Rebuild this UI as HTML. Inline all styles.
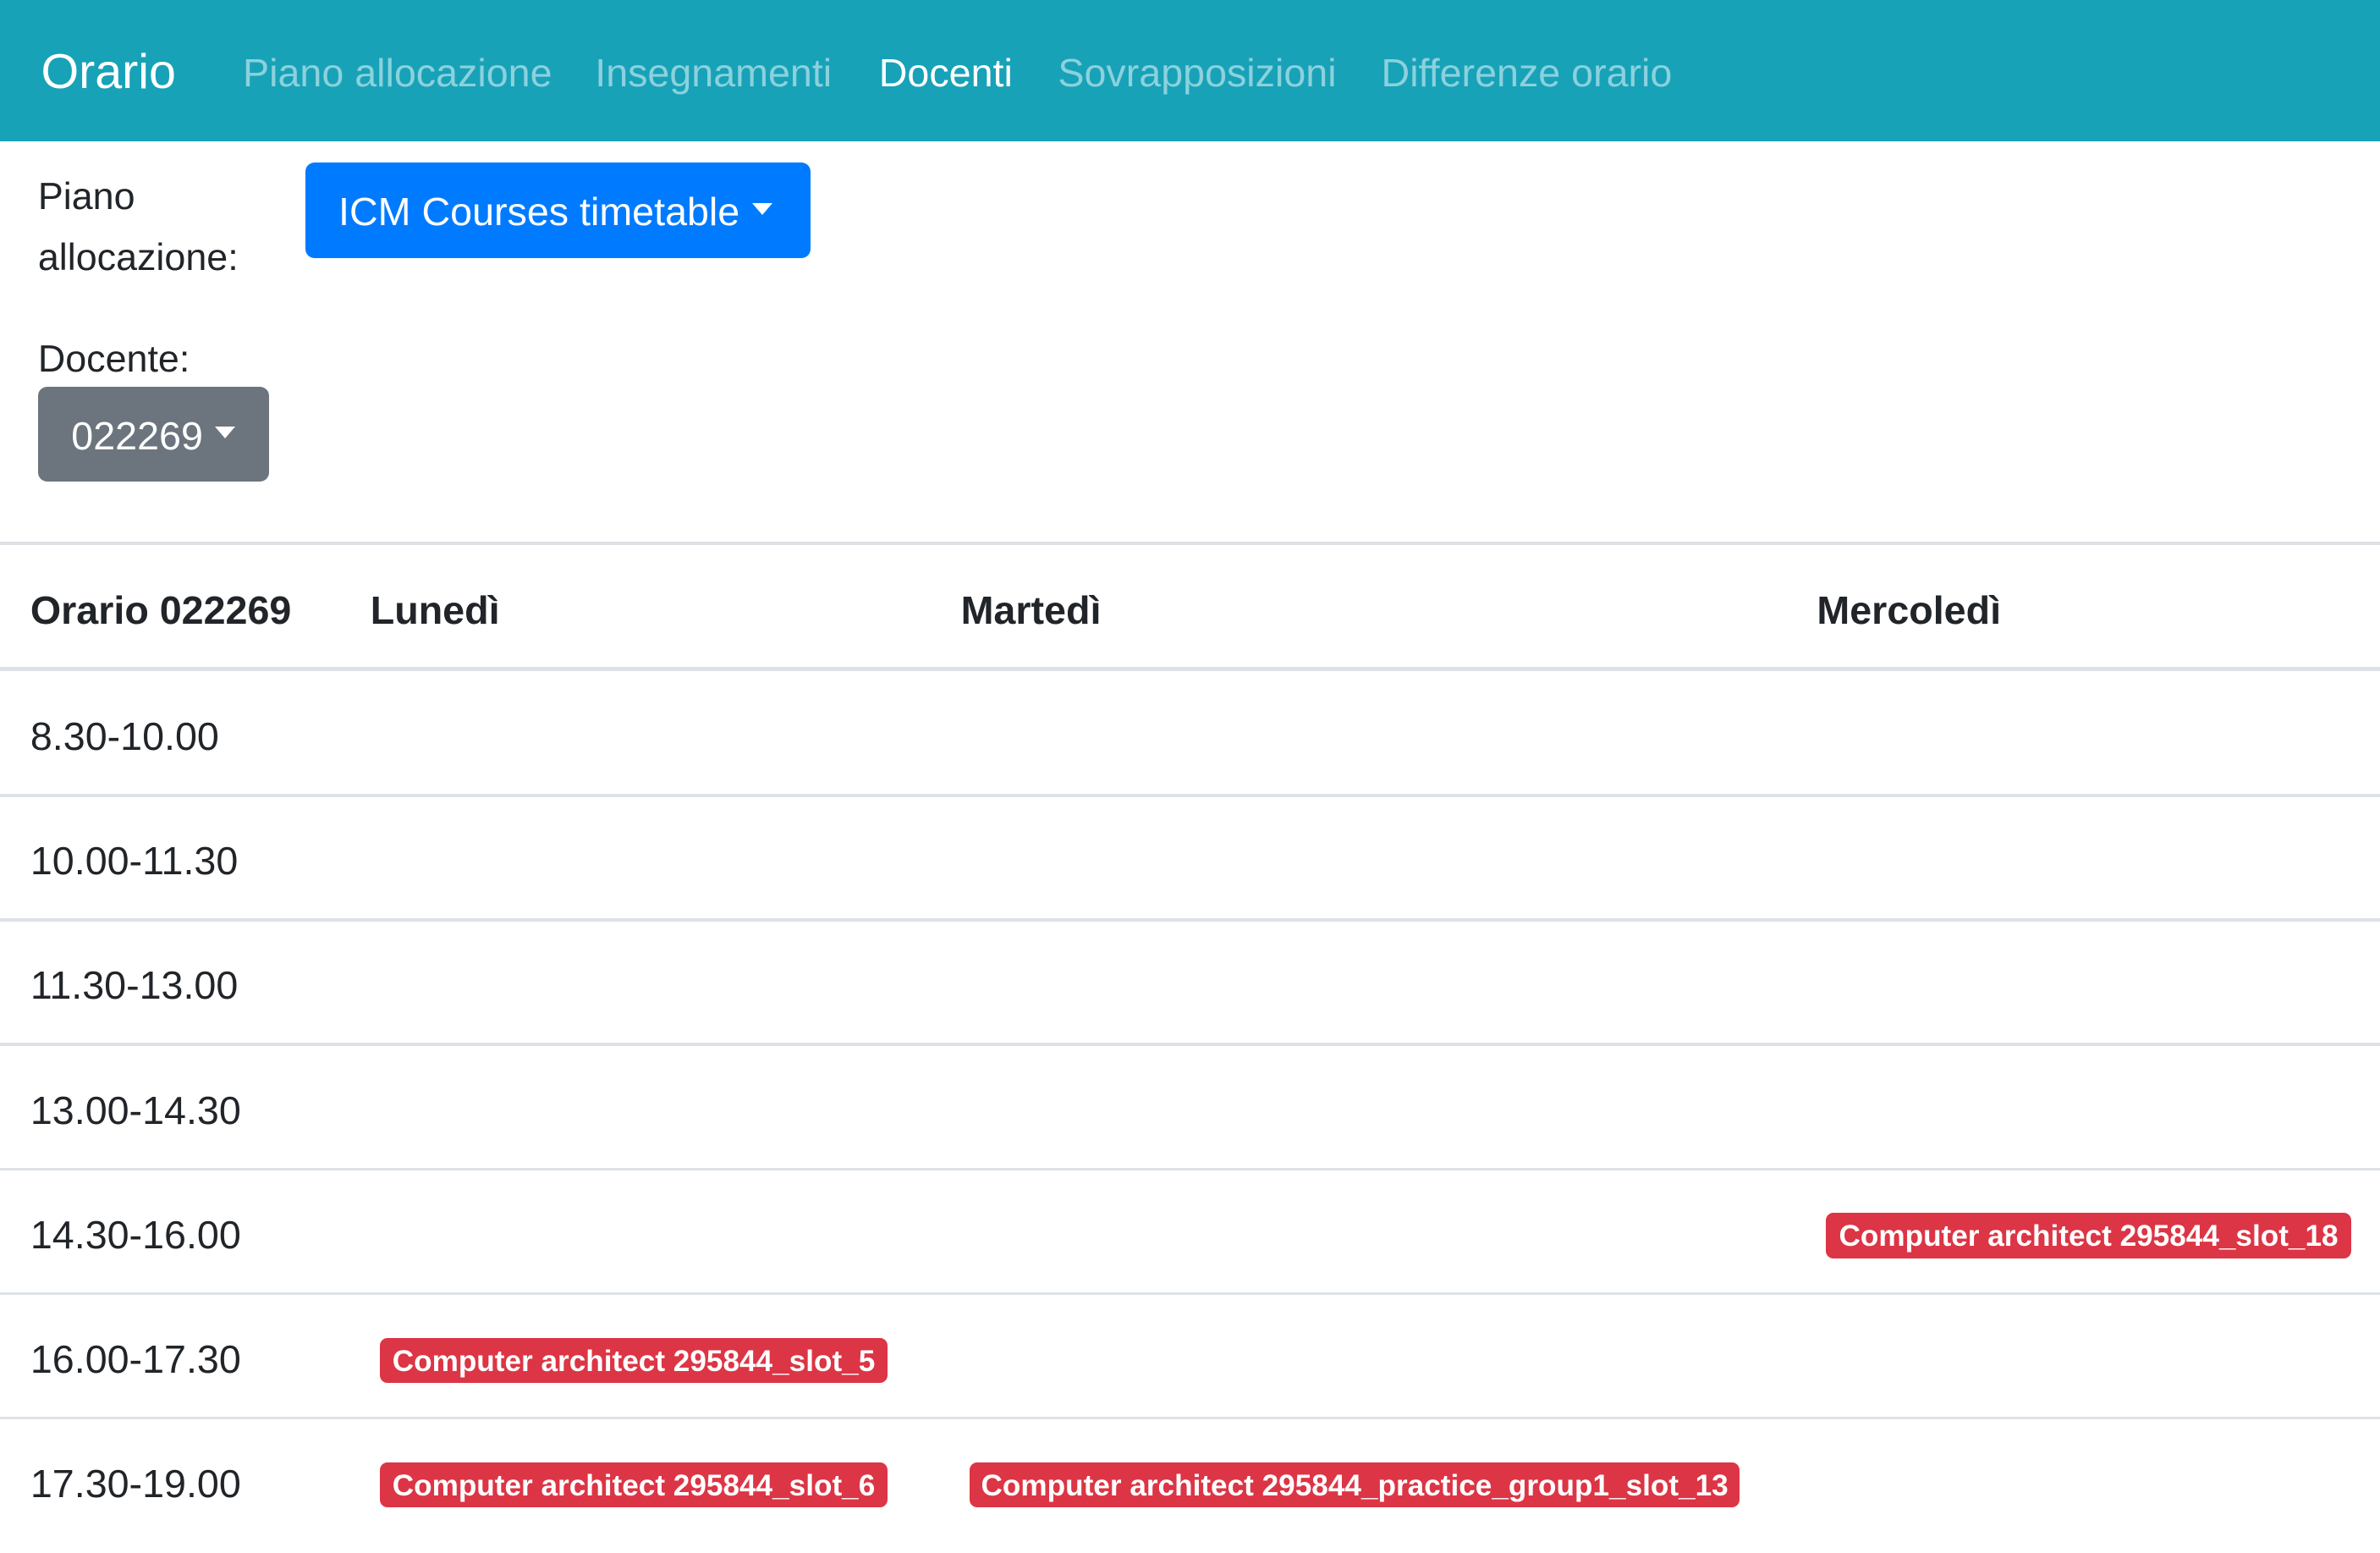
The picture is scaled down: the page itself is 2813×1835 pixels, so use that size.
<!DOCTYPE html>
<html><head><meta charset="utf-8">
<style>
html{zoom:1.794}
body{margin:0;width:1568px;height:1023px;overflow:hidden;background:#fff;font-family:"Liberation Sans",sans-serif;color:#212529;position:relative}
.a{position:absolute;white-space:nowrap}
.nav{position:absolute;left:0;top:0;width:1568px;height:93px;background:#17a2b8}
.brand{left:27px;top:29px;font-size:32px;color:#fff}
.nl{top:33px;font-size:26px;color:#8cd1dc}
.btn{border-radius:6px;color:#fff;font-size:26px;display:flex;align-items:center;box-sizing:border-box}
.caret{display:inline-block;width:0;height:0;border-left:7px solid transparent;border-right:7px solid transparent;border-top:8px solid #fff;margin-left:8px;position:relative;top:-2px}
.lbl{font-size:25px;left:25px}
.hl{position:absolute;left:0;width:1568px;background:#dee2e6}
.th{top:387px;font-size:26px;font-weight:bold}
.t{left:20px;font-size:26px}
.b{background:#dc3545;color:#fff;font-weight:bold;font-size:19.6px;border-radius:5px;height:30px;line-height:31px;box-sizing:border-box;text-align:center;overflow:hidden}
</style></head><body>
<div class="nav"></div>
<div class="a brand">Orario</div>
<div class="a nl" style="left:160px">Piano allocazione</div>
<div class="a nl" style="left:392px">Insegnamenti</div>
<div class="a nl" style="left:579px;color:#fff">Docenti</div>
<div class="a nl" style="left:697px">Sovrapposizioni</div>
<div class="a nl" style="left:910px">Differenze orario</div>

<div class="a lbl" style="top:115px">Piano</div>
<div class="a lbl" style="top:155px">allocazione:</div>
<div class="a btn" style="left:201px;top:107px;width:333px;height:63px;background:#007bff;padding-left:22px;padding-top:2px">ICM Courses timetable<span class="caret"></span></div>
<div class="a lbl" style="top:222px">Docente:</div>
<div class="a btn" style="left:25px;top:255px;width:152px;height:62px;background:#6c757d;padding-left:22px;padding-top:2px">022269<span class="caret"></span></div>

<div class="hl" style="top:357px;height:2px"></div>
<div class="a th" style="left:20px">Orario 022269</div>
<div class="a th" style="left:244px">Lunedì</div>
<div class="a th" style="left:633px">Martedì</div>
<div class="a th" style="left:1197px">Mercoledì</div>
<div class="hl" style="top:439px;height:3px"></div>

<div class="a t" style="top:470px">8.30-10.00</div>
<div class="hl" style="top:523px;height:2px"></div>
<div class="a t" style="top:552px">10.00-11.30</div>
<div class="hl" style="top:605px;height:2px"></div>
<div class="a t" style="top:634px">11.30-13.00</div>
<div class="hl" style="top:687px;height:2px"></div>
<div class="a t" style="top:716px">13.00-14.30</div>
<div class="hl" style="top:769px;height:2px"></div>
<div class="a t" style="top:798px">14.30-16.00</div>
<div class="hl" style="top:851px;height:2px"></div>
<div class="a t" style="top:880px">16.00-17.30</div>
<div class="hl" style="top:933px;height:2px"></div>
<div class="a t" style="top:962px">17.30-19.00</div>

<div class="a b" style="left:1203px;top:799px;width:346px">Computer architect 295844_slot_18</div>
<div class="a b" style="left:250px;top:881px;width:335px">Computer architect 295844_slot_5</div>
<div class="a b" style="left:250px;top:963px;width:335px">Computer architect 295844_slot_6</div>
<div class="a b" style="left:639px;top:963px;width:507px">Computer architect 295844_practice_group1_slot_13</div>
</body></html>
